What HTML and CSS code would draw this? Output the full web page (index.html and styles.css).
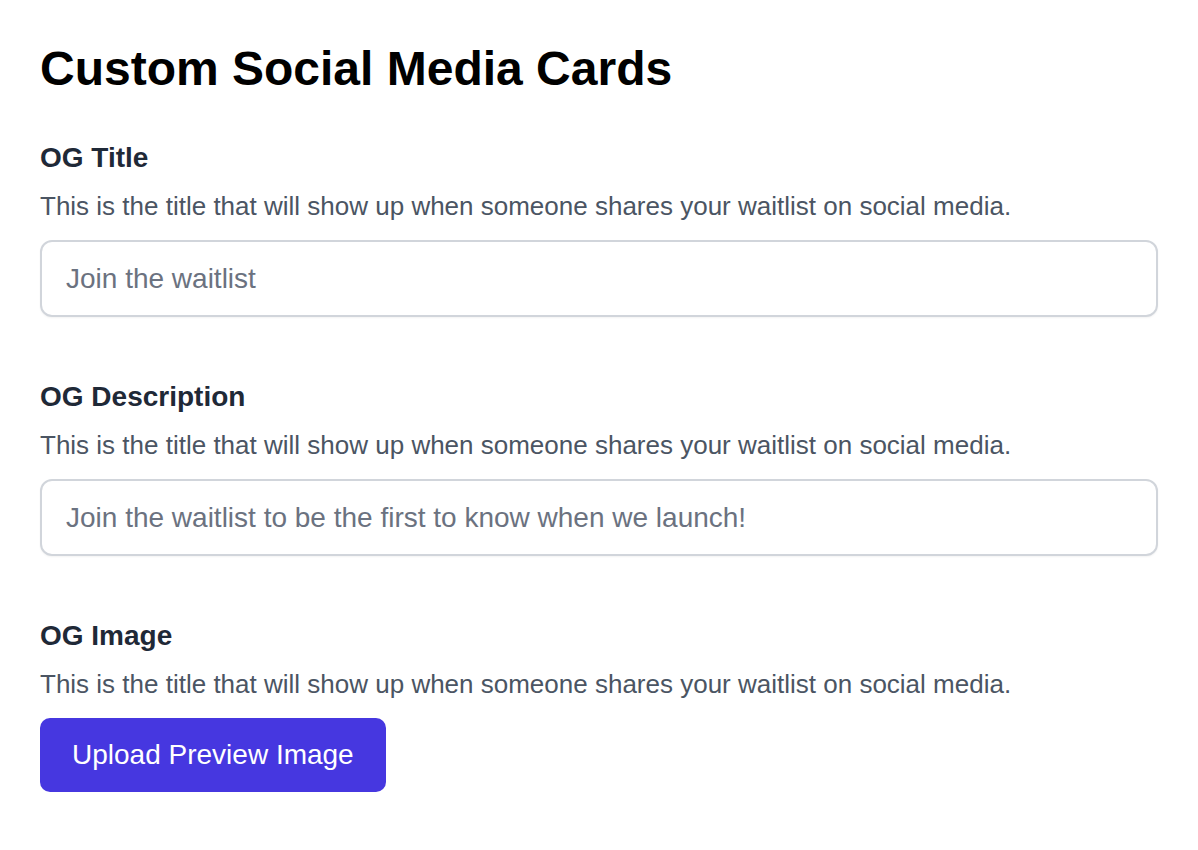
FILE: index.html
```html
<!DOCTYPE html>
<html lang="en">
<head>
    <meta charset="UTF-8">
    <meta name="viewport" content="width=device-width, initial-scale=1.0">
    <title>Custom Social Media Cards</title>
    <link rel="stylesheet" href="styles.css">
</head>
<body>
    <div class="container">
        <h1>Custom Social Media Cards</h1>

        <div class="field">
            <h2>OG Title</h2>
            <p class="hint">This is the title that will show up when someone shares your waitlist on social media.</p>
            <input type="text" id="ogTitle" placeholder="Join the waitlist">
        </div>

        <div class="field">
            <h2>OG Description</h2>
            <p class="hint">This is the title that will show up when someone shares your waitlist on social media.</p>
            <input type="text" id="ogDescription" placeholder="Join the waitlist to be the first to know when we launch!">
        </div>

        <div class="field">
            <h2>OG Image</h2>
            <p class="hint">This is the title that will show up when someone shares your waitlist on social media.</p>
            <button class="upload-button">Upload Preview Image</button>
        </div>
    </div>
</body>
</html>
```

FILE: styles.css
```css
body {
    font-family: "Liberation Sans", Arial, Helvetica, sans-serif;
    margin: 0;
    padding: 0;
    background-color: #fff;
}
.container {
    padding: 40px 40px 0 40px;
    display: flex;
    flex-direction: column;
}
h1 {
    margin: 0 0 43px 0;
    font-size: 48px;
    line-height: 58px;
    font-weight: bold;
    color: #000;
}
.field {
    display: flex;
    flex-direction: column;
    align-items: flex-start;
    margin-bottom: 63px;
}
.field h2 {
    margin: 0 0 15px 0;
    font-size: 28px;
    line-height: 34px;
    font-weight: bold;
    color: #1f2937;
}
.hint {
    margin: 0 0 18px 0;
    font-size: 26px;
    line-height: 32px;
    color: #4b5563;
}
input[type="text"] {
    box-sizing: border-box;
    width: 100%;
    height: 77px;
    padding: 0 24px;
    border: 2px solid #d1d5db;
    border-radius: 12px;
    box-shadow: 0 1px 2px rgba(0, 0, 0, 0.05);
    font-family: inherit;
    font-size: 28px;
    color: #111827;
    outline: none;
}
input[type="text"]::placeholder {
    color: #6b7280;
}
.upload-button {
    padding: 20px 32px 20px 32px;
    border: none;
    border-radius: 10px;
    background-color: #4637e0;
    color: #fff;
    font-family: inherit;
    font-size: 28px;
    line-height: 34px;
    cursor: pointer;
}
.upload-button:hover {
    background-color: #3a2cc4;
}
```
